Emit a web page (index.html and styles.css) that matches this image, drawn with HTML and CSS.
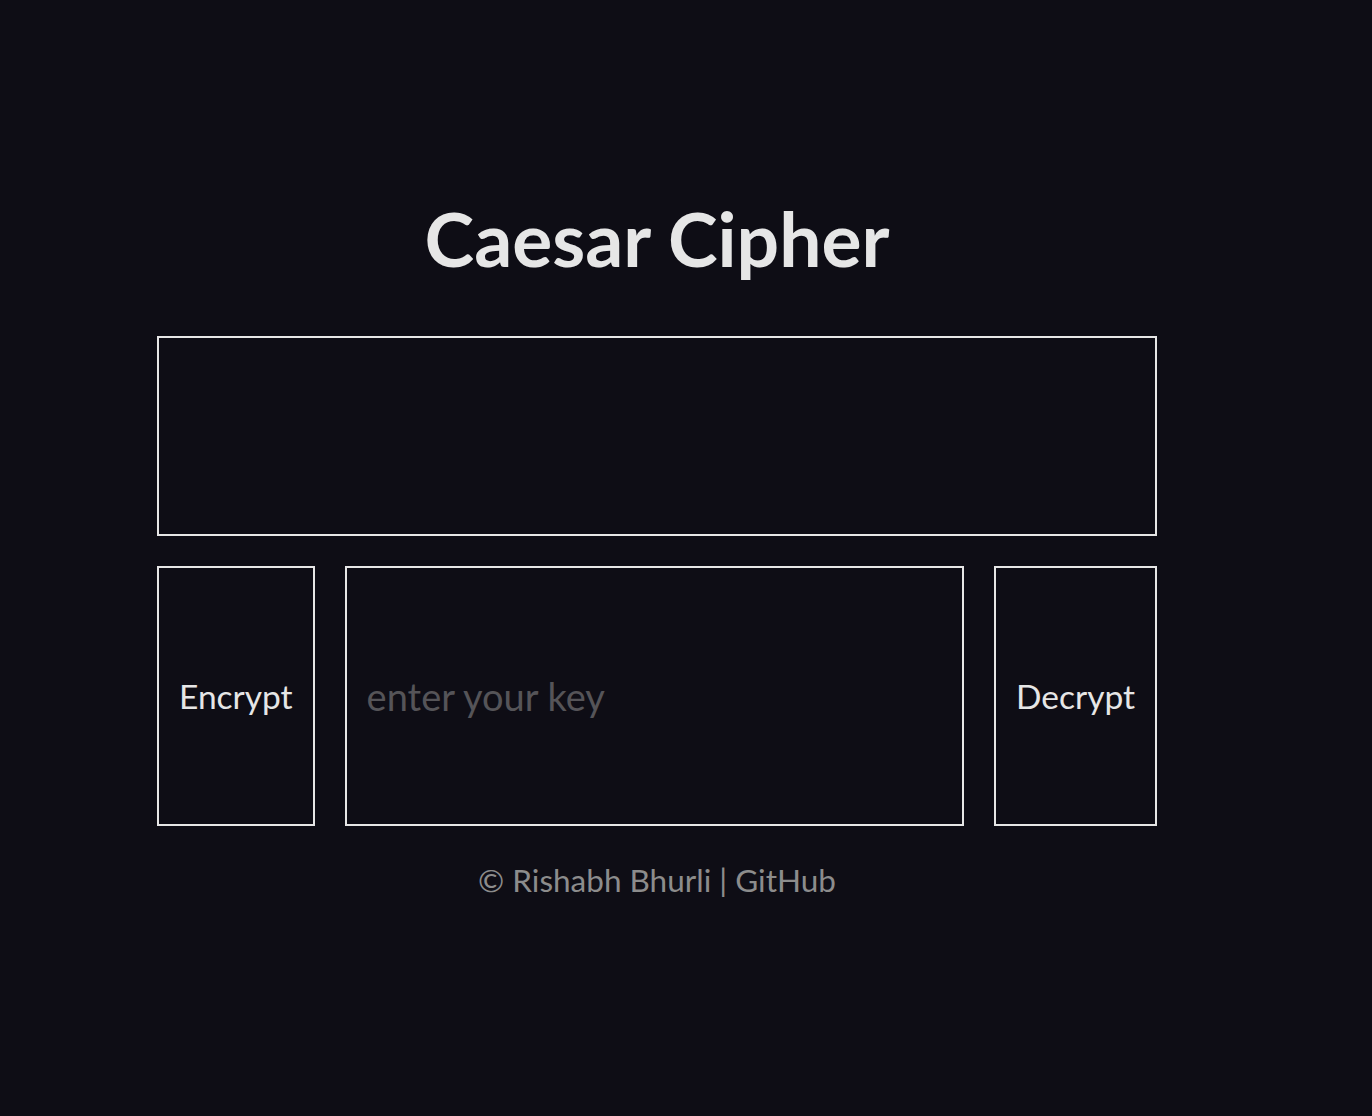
FILE: index.html
```html
<!DOCTYPE html>
<html lang="en">
<head>
<meta charset="utf-8">
<title>Caesar Cipher</title>
<link rel="stylesheet" href="styles.css">
</head>
<body>
<main class="app">
  <h1 class="title">Caesar Cipher</h1>
  <textarea class="message"></textarea>
  <div class="controls">
    <button class="btn">Encrypt</button>
    <input class="key" type="text" placeholder="enter your key">
    <button class="btn">Decrypt</button>
  </div>
  <footer class="footer">© Rishabh Bhurli | <a class="link" href="#">GitHub</a></footer>
</main>
</body>
</html>
```

FILE: styles.css
```css
* { box-sizing: border-box; }
html, body { margin: 0; height: 100%; }
body {
  background: #0e0d15;
  font-family: Lato, "Open Sans", sans-serif;
  color: #e6e6e6;
  display: flex;
  align-items: center;
  justify-content: center;
  padding-right: 58px;
  padding-bottom: 25px;
}
.app {
  width: 1000px;
  display: flex;
  flex-direction: column;
  align-items: stretch;
}
.title {
  margin: 0 0 48px;
  text-align: center;
  font-size: 75px;
  font-weight: 700;
  line-height: 100px;
  color: #e6e6e6;
}
.message {
  display: block;
  width: 100%;
  height: 200px;
  background: #0e0d15;
  border: 2px solid #e6e6e6;
  resize: none;
  color: #e6e6e6;
  font-family: inherit;
  font-size: 32px;
  padding: 16px;
  margin: 0;
}
.controls {
  display: flex;
  gap: 30px;
  height: 260px;
  margin-top: 30px;
}
.btn {
  background: #0e0d15;
  border: 2px solid #e6e6e6;
  color: #e6e6e6;
  font-family: inherit;
  font-size: 33.5px;
  padding: 0 20px;
  margin: 0;
  cursor: pointer;
}
.key {
  flex: 1;
  min-width: 0;
  background: #0e0d15;
  border: 2px solid #e6e6e6;
  color: #e6e6e6;
  font-family: inherit;
  font-size: 38px;
  padding: 0 20px;
  margin: 0;
  outline: none;
}
.key::placeholder { color: #555458; }
.footer {
  margin-top: 31px;
  text-align: center;
  font-size: 31.5px;
  line-height: 46px;
  color: #8c8c8c;
}
.link { color: #8c8c8c; text-decoration: none; }
```
